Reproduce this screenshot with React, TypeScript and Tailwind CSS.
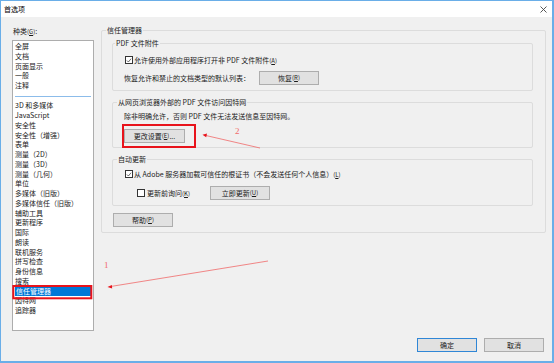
import React from 'react';

const topItems = ['全屏', '文档', '页面显示', '一般', '注释'];
const restItems = [
    '3D 和多媒体', 'JavaScript', '安全性', '安全性（增强）', '表单', '测量（2D）', '测量（3D）', '测量（几何）',
    '单位', '多媒体（旧版）', '多媒体信任（旧版）', '辅助工具', '更新程序', '国际', '朗读', '联机服务',
    '拼写检查', '身份信息', '搜索', '信任管理器', '因特网', '追踪器',
];

const Key: React.FC<{ k: string }> = ({ k }) => (
    <span className="text-[6px]">(<span className="underline">{k}</span>)</span>
);

const Btn: React.FC<{ children: React.ReactNode; w?: string; primary?: boolean }> = ({ children, w = 'w-[60px]', primary }) => (
    <div className={`${w} h-[14px] shrink-0 flex items-center justify-center bg-[#e1e1e1] border ${primary ? 'border-[#2f86d6]' : 'border-[#adadad]'} text-[7px] leading-none text-[#1a1a1a]`}>
        {children}
    </div>
);

const Check: React.FC<{ on?: boolean }> = ({ on }) => (
    <span className="w-[8px] h-[8px] shrink-0 border border-[#333] bg-white flex items-center justify-center">
        {on && (
            <svg viewBox="0 0 8 8" className="w-[7px] h-[7px]">
                <path d="M1.2 4 L3.2 6 L6.8 1.6" stroke="#222" strokeWidth="0.9" fill="none" />
            </svg>
        )}
    </span>
);

const Group: React.FC<{ title: string; left?: string; className?: string; children: React.ReactNode }> = ({ title, left = 'left-[3px]', className = '', children }) => (
    <div className={`relative border border-[#dcdcdc] rounded-[2px] ${className}`}>
        <span className={`absolute ${left} top-[-6px] bg-[#f0f0f0] px-[1px] leading-[10px] text-[7px] text-[#1a1a1a] whitespace-nowrap`}>{title}</span>
        {children}
    </div>
);

const App: React.FC = () => {
    return (
        <div className="relative w-[554px] h-[363px] flex flex-col border-t border-l border-r-2 border-b-2 border-[#6aaee8] bg-[#f0f0f0] overflow-hidden font-['Noto_Sans_CJK_SC',sans-serif] text-[#1a1a1a]">
            {/* title bar */}
            <div className="h-[16px] shrink-0 bg-white flex items-center justify-between pl-[3px] pr-[5px]">
                <span className="text-[7px] leading-none text-black">首选项</span>
                <svg viewBox="0 0 7 7" className="w-[7px] h-[7px]">
                    <path d="M0.5 0.5 L6.5 6.5 M6.5 0.5 L0.5 6.5" stroke="#444" strokeWidth="0.9" />
                </svg>
            </div>

            <div className="flex-1 flex flex-col">
                <div className="flex">
                    {/* categories */}
                    <div className="ml-[11px] mt-[9px] flex flex-col">
                        <div className="h-[10px] leading-[10px] text-[7px] pl-[1px]">种类<Key k="G" />:</div>
                        <div className="mt-[4px] w-[82px] h-[291px] border border-[#adadad] bg-white pt-[1px] text-[7px]">
                            {topItems.map((t) => (
                                <div key={t} className="h-[9.75px] leading-[9.75px] pl-[2px] whitespace-nowrap">{t}</div>
                            ))}
                            <div className="h-[10.5px] flex items-center px-[2px]">
                                <div className="h-px w-full bg-[#8cbcea]" />
                            </div>
                            {restItems.map((t) =>
                                t === '信任管理器' ? (
                                    <div key={t} className="h-[9.75px] leading-[9.75px] ml-[2px] mr-[1px] pl-[1px] bg-[#0078d7] text-white whitespace-nowrap">{t}</div>
                                ) : (
                                    <div key={t} className="h-[9.75px] leading-[9.75px] pl-[2px] whitespace-nowrap">{t}</div>
                                )
                            )}
                        </div>
                    </div>

                    {/* trust manager panel */}
                    <div className="ml-[7px] mt-[13px]">
                        <Group title="信任管理器" left="left-[4px]" className="w-[445px] pt-[12px] pl-[10px] pb-[5px]">
                            <Group title="PDF 文件附件" left="left-[2px]" className="w-[421px] pt-[10px] pl-[11px] pb-[5px]">
                                <div className="h-[12px] flex items-center gap-[1px] ml-[1px] text-[7px]">
                                    <Check on />
                                    <span>允许使用外部应用程序打开非 PDF 文件附件<Key k="A" /></span>
                                </div>
                                <div className="mt-[5px] h-[14px] flex items-center text-[7px]">
                                    <span className="w-[135px]">恢复允许和禁止的文档类型的默认列表：</span>
                                    <Btn>恢复<Key k="R" /></Btn>
                                </div>
                            </Group>

                            <Group title="从网页浏览器外部的 PDF 文件访问因特网" left="left-[4px]" className="mt-[11px] w-[421px] pt-[8px] pl-[11px] pb-[4px]">
                                <div className="h-[10px] leading-[10px] text-[7px]">除非明确允许，否则 PDF 文件无法发送信息至因特网。</div>
                                <div className="mt-[8px] flex">
                                    <Btn w="w-[61px]">更改设置<Key k="E" />...</Btn>
                                </div>
                            </Group>

                            <Group title="自动更新" left="left-[4px]" className="mt-[11px] w-[421px] pt-[9px] pl-[11px] pb-[5px]">
                                <div className="h-[10px] flex items-center gap-[1px] ml-[1px] text-[7px]">
                                    <Check on />
                                    <span>从 Adobe 服务器加载可信任的根证书（不会发送任何个人信息）<Key k="L" /></span>
                                </div>
                                <div className="mt-[7px] h-[14px] flex items-center text-[7px]">
                                    <div className="w-[73px] ml-[13px] flex items-center gap-[2px]">
                                        <Check />
                                        <span>更新前询问<Key k="K" /></span>
                                    </div>
                                    <Btn>立即更新<Key k="U" /></Btn>
                                </div>
                            </Group>

                            <div className="mt-[7px] ml-[1px] flex">
                                <Btn>帮助<Key k="P" /></Btn>
                            </div>
                        </Group>
                    </div>
                </div>

                <div className="mt-[7px] flex justify-end gap-[7px] pr-[8px]">
                    <Btn primary>确定</Btn>
                    <Btn>取消</Btn>
                </div>
            </div>

            {/* annotations */}
            <svg className="absolute left-[-1px] top-[-1px] w-[554px] h-[363px] pointer-events-none" viewBox="0 0 554 363">
                <rect x="123" y="125" width="72" height="22" fill="none" stroke="#e8131b" strokeWidth="2" />
                <rect x="13.3" y="286" width="78" height="12.3" fill="none" stroke="#e8131b" strokeWidth="2" />
                <line x1="260" y1="148" x2="205" y2="135.3" stroke="#f06a6a" strokeWidth="0.8" />
                <polygon points="202.5,134.8 207,133.6 206.2,137.2" fill="#e8131b" />
                <text x="235" y="134" fontSize="9" fill="#f06a6a" fontFamily="Liberation Serif, serif">2</text>
                <line x1="268" y1="261" x2="110" y2="286.6" stroke="#f06a6a" strokeWidth="0.8" />
                <polygon points="107.5,287 111.8,285 112.2,288.4" fill="#e8131b" />
                <text x="104" y="268" fontSize="9" fill="#f06a6a" fontFamily="Liberation Serif, serif">1</text>
            </svg>
        </div>
    );
};

export default App;
